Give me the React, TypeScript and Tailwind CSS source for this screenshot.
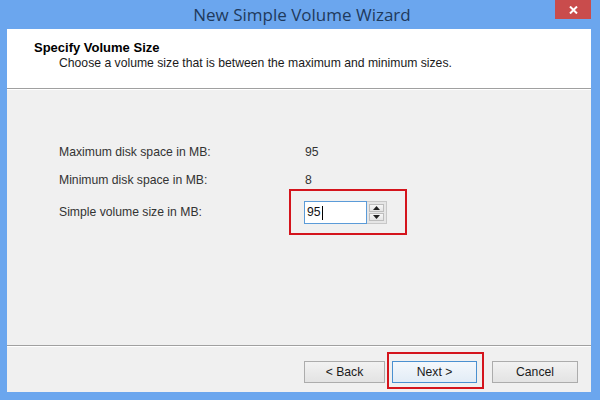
import React from 'react';

const ui = { fontFamily: '"Liberation Sans", Arial, sans-serif' };

function WinButton({ label, focused }: { label: string; focused?: boolean }) {
  return (
    <div
      className={`flex h-[22px] items-center justify-center border text-[12.2px] text-[#1a1a1a] ${
        focused
          ? 'border-[#4a90d0] bg-gradient-to-b from-[#f4f8fc] to-[#e2ecf6]'
          : 'border-[#acacac] bg-gradient-to-b from-[#f2f2f2] to-[#e3e3e3]'
      }`}
      style={ui}
    >
      {label}
    </div>
  );
}

function Spinner() {
  return (
    <div className="flex h-[23px] w-[83px]">
      <div className="flex flex-1 items-center border border-[#5b9bd8] bg-white pl-[2px] text-[12.2px] text-[#111]">
        95<span className="ml-[1px] h-[14px] w-px bg-black" />
      </div>
      <div className="flex w-[20px] flex-col gap-px border border-l-0 border-[#c8c8c8] bg-[#e6e6e6] p-[2px]">
        <div className="flex flex-1 items-center justify-center border border-[#bdbdbd] bg-gradient-to-b from-[#f7f7f7] to-[#e4e4e4]">
          <svg width="7" height="4" viewBox="0 0 7 4"><path d="M3.5 0 L7 4 L0 4 Z" fill="#222" /></svg>
        </div>
        <div className="flex flex-1 items-center justify-center border border-[#bdbdbd] bg-gradient-to-b from-[#f7f7f7] to-[#e4e4e4]">
          <svg width="7" height="4" viewBox="0 0 7 4"><path d="M0 0 L7 0 L3.5 4 Z" fill="#222" /></svg>
        </div>
      </div>
    </div>
  );
}

export default function App() {
  return (
    <div className="flex h-[400px] w-[600px] flex-col bg-[#6ba6ee]" style={ui}>
      {/* Title bar */}
      <div className="relative flex h-[29px] shrink-0 items-center justify-center">
        <span
          className="pl-[4px] text-[17px] text-[#1f3a5c]"
          style={{ fontFamily: '"Open Sans", "Noto Sans", sans-serif' }}
        >
          New Simple Volume Wizard
        </span>
        <div className="absolute right-[9px] top-0 flex h-[19px] w-[36px] items-center justify-center bg-[#c94c4c]">
          <svg width="9" height="8" viewBox="0 0 9 8">
            <path d="M1 0.5 L8 7.5 M8 0.5 L1 7.5" stroke="#fff" strokeWidth="2" />
          </svg>
        </div>
      </div>

      {/* Client area */}
      <div className="mb-[8px] ml-[7px] mr-[9px] flex flex-1 flex-col bg-[#f0f0f0]">
        <div className="flex h-[59px] flex-col bg-white pl-[27px] pt-[11px]">
          <div className="text-[13px] font-bold leading-[16px] text-black">Specify Volume Size</div>
          <div className="pl-[25px] text-[12.2px] leading-[15px] text-[#1a1a1a]">
            Choose a volume size that is between the maximum and minimum sizes.
          </div>
        </div>
        <div className="h-px bg-[#a0a0a0]" />
        <div className="h-px bg-white" />

        {/* Body */}
        <div className="flex flex-1 flex-col pl-[52px] pt-[55px] text-[12.2px] text-[#333]">
          <div className="grid grid-cols-[246px_1fr] items-center leading-[15px]">
            <span>Maximum disk space in MB:</span>
            <span>95</span>
          </div>
          <div className="mt-[13px] grid grid-cols-[246px_1fr] items-center leading-[15px]">
            <span>Minimum disk space in MB:</span>
            <span>8</span>
          </div>
          <div className="mt-[13px] grid grid-cols-[245px_1fr] items-center">
            <span>Simple volume size in MB:</span>
            <div className="relative w-[83px]">
              <Spinner />
              <div className="absolute -bottom-[11px] -left-[15px] -right-[20px] -top-[12px] border-2 border-[#d4141c]" />
            </div>
          </div>
        </div>

        <div className="h-px bg-[#a0a0a0]" />
        <div className="h-px bg-white" />

        {/* Footer */}
        <div className="flex h-[45px] items-start justify-end gap-[7px] pr-[13px] pt-[14px]">
          <div className="w-[81px]">
            <WinButton label="< Back" />
          </div>
          <div className="relative w-[85px]">
            <WinButton label="Next >" focused />
            <div className="absolute -bottom-[6px] -left-[5px] -right-[7px] -top-[9px] border-2 border-[#d4141c]" />
          </div>
          <div className="ml-[8px] w-[86px]">
            <WinButton label="Cancel" />
          </div>
        </div>
      </div>
    </div>
  );
}
